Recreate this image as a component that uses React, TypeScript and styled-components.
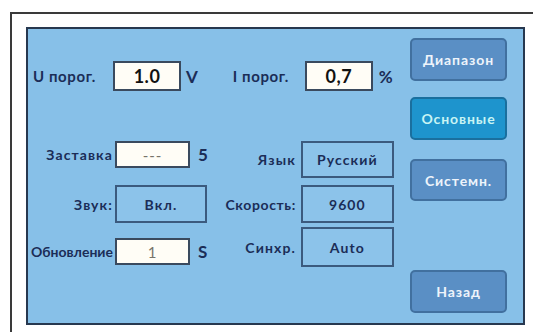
import React from 'react'
import styled, { createGlobalStyle } from 'styled-components';

const GlobalStyle = createGlobalStyle`
  html, body {
    margin: 0;
    padding: 0;
    background: #ffffff;
    overflow: hidden;
  }
  body {
    font-family: Lato, "Noto Sans", sans-serif;
  }
`;

const Page = styled.div`
  width: 533px;
  height: 332px;
  padding: 12px 0 0 10px;
  box-sizing: border-box;
  overflow: hidden;
`;

const Frame = styled.div`
  width: 540px;
  height: 340px;
  border: 2px solid #3a3a3a;
  border-right: none;
  border-bottom: none;
  background: #ffffff;
  padding: 13px 0 0 14px;
  box-sizing: border-box;
`;

const Panel = styled.div`
  width: 499px;
  height: 298px;
  box-sizing: border-box;
  background: #87c0e8;
  border: 2px solid #27384f;
  display: flex;
  padding: 9px 16px 10px 0;
`;

const Form = styled.div`
  flex: 1;
  display: flex;
  flex-direction: column;
`;

const TopRow = styled.div`
  display: flex;
  align-items: center;
  margin-top: 23px;
  height: 30px;
`;

const Label = styled.span<{ $size?: number; $w?: number; $sp?: number }>`
  color: #1b2d57;
  font-weight: 700;
  font-size: ${(p) => (p.$size ? p.$size : 14)}px;
  letter-spacing: ${(p) => (p.$sp !== undefined ? p.$sp : 1.1)}px;
  white-space: nowrap;
  ${(p) => (p.$w ? `width: ${p.$w}px; flex: none;` : '')}
`;

const SideLabel = styled(Label)`
  text-align: right;
`;

const Input = styled.div<{ $w: number; $h: number; $muted?: boolean }>`
  width: ${(p) => p.$w}px;
  height: ${(p) => p.$h}px;
  flex: none;
  box-sizing: border-box;
  background: #fffdf6;
  border: 2px solid #3a4a5e;
  display: flex;
  align-items: center;
  justify-content: center;
  font-weight: ${(p) => (p.$muted ? 400 : 700)};
  font-size: ${(p) => (p.$muted ? 15 : 18)}px;
  letter-spacing: ${(p) => (p.$muted ? 1 : 0.5)}px;
  color: ${(p) => (p.$muted ? '#77736a' : '#111111')};
`;

const Box = styled.div<{ $w: number; $h: number }>`
  width: ${(p) => p.$w}px;
  height: ${(p) => p.$h}px;
  flex: none;
  box-sizing: border-box;
  background: #8cc3ea;
  border: 2px solid #3b5a7e;
  display: flex;
  align-items: center;
  justify-content: center;
  color: #1b2d57;
  font-weight: 700;
  font-size: 14px;
  letter-spacing: 1.1px;
`;

const Unit = styled.span<{ $left?: number }>`
  color: #1b2d57;
  font-weight: 700;
  font-size: 17px;
  margin-left: ${(p) => (p.$left ? p.$left : 6)}px;
`;

const Lower = styled.div`
  display: flex;
  margin-top: 50px;
`;

const Column = styled.div<{ $left?: number }>`
  display: flex;
  flex-direction: column;
  margin-left: ${(p) => (p.$left ? p.$left : 0)}px;
`;

const Field = styled.div<{ $top?: number; $gap?: number }>`
  display: flex;
  align-items: center;
  gap: ${(p) => (p.$gap ? p.$gap : 2)}px;
  margin-top: ${(p) => (p.$top ? p.$top : 0)}px;
`;

const Spacer = styled.div<{ $w: number }>`
  width: ${(p) => p.$w}px;
  flex: none;
`;

const Side = styled.div`
  width: 97px;
  display: flex;
  flex-direction: column;
`;

const Button = styled.div<{ $active?: boolean; $top?: number; $h?: number }>`
  height: ${(p) => (p.$h ? p.$h : 44)}px;
  margin-top: ${(p) => (p.$top ? p.$top : 0)}px;
  box-sizing: border-box;
  border-radius: 5px;
  background: ${(p) => (p.$active ? '#1e94cd' : '#5a8fc5')};
  border: 2px solid ${(p) => (p.$active ? '#1a6f9e' : '#41709f')};
  color: ${(p) => (p.$active ? '#c8f4f4' : '#eef4fb')};
  font-weight: 700;
  font-size: 14px;
  letter-spacing: 0.9px;
  display: flex;
  align-items: center;
  justify-content: center;
`;

export default function App() {
  return (
    <Page>
      <GlobalStyle />
      <Frame>
        <Panel>
          <Form>
            <TopRow>
              <Spacer $w={5} />
              <Label $size={15} $sp={0.6} $w={80}>U порог.</Label>
              <Input $w={68} $h={30}>1.0</Input>
              <Unit $left={5}>V</Unit>
              <Spacer $w={35} />
              <Label $size={15} $sp={0.6} $w={72}>I порог.</Label>
              <Input $w={68} $h={30}>0,7</Input>
              <Unit $left={6}>%</Unit>
            </TopRow>
            <Lower>
              <Column>
                <Field>
                  <SideLabel $w={85}>Заставка</SideLabel>
                  <Input $w={75} $h={27} $muted>---</Input>
                  <Unit>5</Unit>
                </Field>
                <Field $top={17}>
                  <SideLabel $w={85}>Звук:</SideLabel>
                  <Box $w={92} $h={38}>Вкл.</Box>
                </Field>
                <Field $top={15}>
                  <SideLabel $w={85} $sp={0}>Обновление</SideLabel>
                  <Input $w={75} $h={27} $muted>1</Input>
                  <Unit>S</Unit>
                </Field>
              </Column>
              <Column $left={8}>
                <Field $gap={5}>
                  <SideLabel $w={80}>Язык</SideLabel>
                  <Box $w={93} $h={37}>Русский</Box>
                </Field>
                <Field $gap={5} $top={7}>
                  <SideLabel $w={80} $sp={0.6}>Скорость:</SideLabel>
                  <Box $w={93} $h={38}>9600</Box>
                </Field>
                <Field $gap={5} $top={4}>
                  <SideLabel $w={80}>Синхр.</SideLabel>
                  <Box $w={93} $h={40}>Auto</Box>
                </Field>
              </Column>
            </Lower>
          </Form>
          <Side>
            <Button>Диапазон</Button>
            <Button $active $top={16} $h={43}>Основные</Button>
            <Button $top={19} $h={43}>Системн.</Button>
            <Button $top={69} $h={43}>Назад</Button>
          </Side>
        </Panel>
      </Frame>
    </Page>
  );
}
